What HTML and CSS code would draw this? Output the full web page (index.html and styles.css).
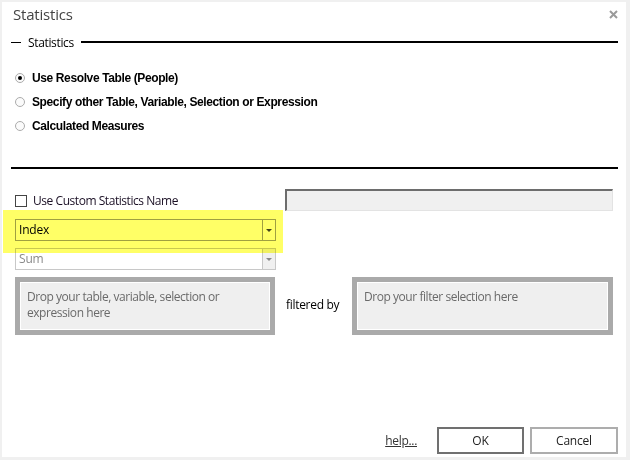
FILE: index.html
```html
<!DOCTYPE html>
<html lang="en">
<head>
<meta charset="utf-8">
<title>Statistics</title>
<link rel="stylesheet" href="styles.css">
</head>
<body>
<div class="dialog">
  <header class="titlebar">
    <span class="title">Statistics</span>
    <button class="close" aria-label="Close">
      <svg width="9" height="9" viewBox="0 0 9 9"><path d="M1 1L8 8M8 1L1 8" stroke="#9a9a9a" stroke-width="2"/></svg>
    </button>
  </header>

  <div class="legend">
    <span class="legend-dash"></span>
    <span class="legend-text">Statistics</span>
    <span class="legend-rule"></span>
  </div>

  <div class="radios">
    <label class="radio"><span class="dot checked"></span><span>Use Resolve Table (People)</span></label>
    <label class="radio"><span class="dot"></span><span>Specify other Table, Variable, Selection or Expression</span></label>
    <label class="radio"><span class="dot"></span><span>Calculated Measures</span></label>
  </div>

  <hr class="rule">

  <div class="name-row">
    <label class="check"><span class="box"></span><span>Use Custom Statistics Name</span></label>
    <div class="name-input"></div>
  </div>

  <div class="combo-wrap">
    <div class="combo">
      <span class="combo-value">Index</span>
      <span class="combo-btn"><span class="caret"></span></span>
    </div>
    <div class="marker"></div>
  </div>

  <div class="combo disabled">
    <span class="combo-value">Sum</span>
    <span class="combo-btn"><span class="caret"></span></span>
  </div>

  <div class="drops">
    <div class="drop main">Drop your table, variable, selection or expression here</div>
    <span class="filtered">filtered by</span>
    <div class="drop filter">Drop your filter selection here</div>
  </div>

  <footer class="actions">
    <a class="help" href="#">help...</a>
    <button class="btn ok">OK</button>
    <button class="btn">Cancel</button>
  </footer>
</div>
</body>
</html>
```

FILE: styles.css
```css
* { box-sizing: border-box; }

html, body {
  margin: 0;
  height: 100%;
}

body {
  background: #f0f0f0;
  padding: 2px 4px 3px 2px;
  font-family: "Open Sans", "Noto Sans", sans-serif;
  font-size: 12px;
  color: #000;
}

.dialog {
  position: relative;
  background: #fff;
  height: 455px;
  display: flex;
  flex-direction: column;
  padding: 0 13px;
}

/* title bar */
.titlebar {
  display: flex;
  align-items: center;
  justify-content: space-between;
  height: 23px;
  margin-left: -2px;
  margin-right: -5px;
}

.title {
  font-size: 15px;
  color: #444;
  letter-spacing: -0.2px;
}

.close {
  border: 0;
  background: none;
  padding: 0;
  width: 9px;
  height: 9px;
  display: flex;
  margin-top: 2px;
}

/* group legend */
.legend {
  display: flex;
  align-items: center;
  height: 14px;
  margin: 10px -5px 0 -4px;
}

.legend-dash {
  width: 10px;
  border-top: 1px solid #000;
}

.legend-text {
  padding: 0 7px;
  font-size: 12px;
  letter-spacing: -0.35px;
}

.legend-rule {
  flex: 1;
  border-top: 2px solid #000;
}

/* radio list */
.radios {
  display: flex;
  flex-direction: column;
  margin-top: 17px;
}

.radio {
  display: flex;
  align-items: center;
  height: 24px;
  gap: 7px;
  font-family: "Liberation Sans", Arial, sans-serif;
  font-weight: bold;
  font-size: 12px;
  letter-spacing: -0.38px;
}

.dot {
  width: 10px;
  height: 10px;
  border-radius: 50%;
  border: 1px solid #acacac;
  background: #fbfbfb;
  display: flex;
  align-items: center;
  justify-content: center;
}

.dot.checked::after {
  content: "";
  width: 4px;
  height: 4px;
  border-radius: 50%;
  background: #000;
}

.rule {
  border: 0;
  border-top: 2px solid #000;
  margin: 29px -5px 0 -4px;
  height: 0;
}

/* custom name row */
.name-row {
  display: flex;
  align-items: center;
  height: 22px;
  margin-top: 20px;
}

.check {
  display: flex;
  align-items: center;
  gap: 6px;
  width: 270px;
  letter-spacing: -0.45px;
  color: #1a0f24;
}

.box {
  width: 12px;
  height: 12px;
  border: 1px solid #444;
  background: #fff;
  margin-top: 1px;
}

.name-input {
  flex: 1;
  height: 22px;
  background: #f0f0f0;
  border: 1px solid #e3e3e3;
  border-top: 2px solid #6d6d6d;
  border-left: 2px solid #6d6d6d;
}

/* combo boxes */
.combo-wrap {
  position: relative;
  margin-top: 8px;
}

.combo {
  display: flex;
  width: 261px;
  height: 22px;
  border: 1px solid #a0a0a0;
  background: #fff;
  align-items: stretch;
}

.combo.disabled {
  margin-top: 7px;
  border-color: #c8c8c8;
  color: #8a8a8a;
}

.combo-value {
  flex: 1;
  padding-left: 3px;
  line-height: 20px;
  letter-spacing: -0.2px;
}

.combo-btn {
  width: 13px;
  border-left: 1px solid #a0a0a0;
  display: flex;
  align-items: center;
  justify-content: center;
}

.combo.disabled .combo-btn {
  background: #f0f0f0;
  border-left-color: #c8c8c8;
}

.caret {
  width: 0;
  height: 0;
  border-left: 3px solid transparent;
  border-right: 3px solid transparent;
  border-top: 3px solid #444;
}

.combo.disabled .caret {
  border-top-color: #888;
}

/* highlighter mark laid over the Index combo */
.marker {
  position: absolute;
  left: -12px;
  top: -9px;
  width: 280px;
  height: 43px;
  background: #ffff66;
  mix-blend-mode: multiply;
  z-index: 2;
  pointer-events: none;
}

/* drop targets */
.drops {
  display: flex;
  align-items: center;
  margin-top: 7px;
}

.drop {
  height: 58px;
  border: 5px solid #aaa;
  background: #efefef;
  box-shadow: inset 0 0 0 1px #fff;
  color: #6a6a6a;
  padding: 7px 7px;
  line-height: 16px;
  letter-spacing: -0.45px;
}

.drop.main {
  width: 260px;
}

.drop.filter {
  width: 261px;
  margin-left: auto;
}

.filtered {
  margin-left: 11px;
  margin-top: -4px;
  letter-spacing: -0.3px;
}

/* footer */
.actions {
  margin-top: auto;
  margin-bottom: 3px;
  display: flex;
  align-items: center;
  justify-content: flex-end;
  gap: 6px;
  margin-right: -5px;
}

.help {
  color: #333;
  margin-right: 14px;
  letter-spacing: -0.3px;
}

.btn {
  font-family: inherit;
  font-size: 12px;
  width: 88px;
  height: 27px;
  background: #fff;
  border: 2px solid #adadad;
  color: #222;
  letter-spacing: -0.2px;
}

.btn.ok {
  width: 87px;
  border-color: #707070;
}
```
